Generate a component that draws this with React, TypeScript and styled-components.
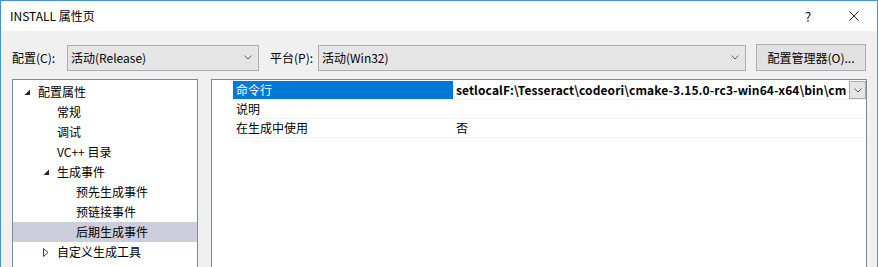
import React from "react";
import styled, { createGlobalStyle } from "styled-components";

const Global = createGlobalStyle`
  html, body { margin: 0; padding: 0; background: #f0f0f0; }
  body { font-family: "Noto Sans CJK SC", "Noto Sans", sans-serif; font-size: 12px; color: #000; }
  #root { width: 878px; height: 267px; overflow: hidden; }
  * { box-sizing: border-box; }
`;

const Window = styled.div`
  width: 878px;
  height: 267px;
  border: 1px solid #3e95d9;
  border-bottom: none;
  background: #f0f0f0;
  display: flex;
  flex-direction: column;
  overflow: hidden;
`;

const TitleBar = styled.div`
  height: 30px;
  flex: none;
  background: #fff;
  display: flex;
  align-items: center;
  padding-left: 9px;
`;

const Title = styled.div`
  flex: 1;
  font-size: 12px;
  line-height: 16px;
`;

const TitleButton = styled.div<{ $w: number }>`
  width: ${(p) => p.$w}px;
  height: 30px;
  display: flex;
  align-items: center;
  justify-content: center;
  font-size: 13px;
  color: #111;
`;

const Body = styled.div`
  flex: 1;
  display: flex;
  flex-direction: column;
  padding: 13px 11px 0 11px;
`;

const ConfigRow = styled.div`
  display: flex;
  align-items: center;
  height: 27px;
`;

const Label = styled.div<{ $w: number; $ml?: number }>`
  width: ${(p) => p.$w}px;
  margin-left: ${(p) => p.$ml ?? 0}px;
  flex: none;
  line-height: 16px;
`;

const Combo = styled.div<{ $w: number }>`
  width: ${(p) => p.$w}px;
  height: 26px;
  flex: none;
  background: #e5e5e5;
  border: 1px solid #acacac;
  display: flex;
  align-items: center;
  padding: 0 6px 0 3px;
`;

const ComboText = styled.div`
  flex: 1;
  line-height: 16px;
`;

const Button = styled.div`
  margin-left: 10px;
  width: 110px;
  height: 27px;
  flex: none;
  background: #e1e1e1;
  border: 1px solid #adadad;
  display: flex;
  align-items: center;
  justify-content: center;
  line-height: 16px;
`;

const Panels = styled.div`
  display: flex;
  margin-top: 8px;
  flex: 1;
  gap: 13px;
`;

const TreePanel = styled.div`
  width: 186px;
  flex: none;
  height: 200px;
  background: #fff;
  border: 1px solid #828790;
  padding-top: 2px;
`;

const TreeRow = styled.div<{ $level: number; $selected?: boolean }>`
  height: 20px;
  display: flex;
  align-items: center;
  padding-left: ${(p) => 8 + p.$level * 19}px;
  background: ${(p) => (p.$selected ? "#cccedb" : "transparent")};
  line-height: 16px;
`;

const Arrow = styled.div`
  width: 17px;
  height: 20px;
  flex: none;
  display: flex;
  align-items: center;
  justify-content: flex-start;
  padding-left: 3px;
`;

const GridPanel = styled.div`
  width: 656px;
  flex: none;
  height: 200px;
  background: #fff;
  border: 1px solid #828790;
  padding: 1px 0 0 21px;
`;

const GridRow = styled.div`
  height: 19px;
  display: flex;
  border-bottom: 1px solid #f0f0f0;
`;

const NameCell = styled.div<{ $selected?: boolean }>`
  width: 220px;
  flex: none;
  padding-left: 3px;
  display: flex;
  align-items: center;
  background: ${(p) => (p.$selected ? "#0078d7" : "transparent")};
  color: ${(p) => (p.$selected ? "#fff" : "#000")};
  line-height: 16px;
`;

const ValueCell = styled.div<{ $bold?: boolean }>`
  flex: 1;
  min-width: 0;
  display: flex;
  align-items: center;
  padding-left: 3px;
  font-weight: ${(p) => (p.$bold ? 700 : 400)};
  line-height: 16px;
  white-space: nowrap;
  overflow: hidden;
`;

const ValueText = styled.div`
  flex: 1;
  min-width: 0;
  overflow: hidden;
  letter-spacing: 0.1px;
`;

const DropButton = styled.div`
  width: 17px;
  height: 18px;
  flex: none;
  background: #e5e5e5;
  border: 1px solid #acacac;
  display: flex;
  align-items: center;
  justify-content: center;
`;

const Chevron = () => (
  <svg width="8" height="5" viewBox="0 0 8 5">
    <path d="M0.5 0.5 L4 4 L7.5 0.5" fill="none" stroke="#5a5a5a" strokeWidth="1" />
  </svg>
);

const Expanded = () => (
  <svg width="7" height="7" viewBox="0 0 7 7">
    <path d="M6 0.5 L6 6 L0.5 6 Z" fill="#262626" />
  </svg>
);

const Collapsed = () => (
  <svg width="6" height="9" viewBox="0 0 6 9">
    <path d="M0.5 0.5 L5 4.5 L0.5 8.5 Z" fill="none" stroke="#444" strokeWidth="1" />
  </svg>
);

const Close = () => (
  <svg width="10" height="10" viewBox="0 0 10 10">
    <path d="M0.5 0.5 L9.5 9.5 M9.5 0.5 L0.5 9.5" stroke="#222" strokeWidth="1" />
  </svg>
);

type TreeItem = { label: string; level: number; arrow?: "open" | "closed"; selected?: boolean };

const treeItems: TreeItem[] = [
  { label: "配置属性", level: 0, arrow: "open" },
  { label: "常规", level: 1 },
  { label: "调试", level: 1 },
  { label: "VC++ 目录", level: 1 },
  { label: "生成事件", level: 1, arrow: "open" },
  { label: "预先生成事件", level: 2 },
  { label: "预链接事件", level: 2 },
  { label: "后期生成事件", level: 2, selected: true },
  { label: "自定义生成工具", level: 1, arrow: "closed" },
];

export default function App() {
  return (
    <>
      <Global />
      <Window>
        <TitleBar>
          <Title>INSTALL 属性页</Title>
          <TitleButton $w={46}>?</TitleButton>
          <TitleButton $w={46}>
            <Close />
          </TitleButton>
        </TitleBar>
        <Body>
          <ConfigRow>
            <Label $w={55}>配置(C):</Label>
            <Combo $w={192}>
              <ComboText>活动(Release)</ComboText>
              <Chevron />
            </Combo>
            <Label $w={48} $ml={11}>平台(P):</Label>
            <Combo $w={428}>
              <ComboText>活动(Win32)</ComboText>
              <Chevron />
            </Combo>
            <Button>配置管理器(O)...</Button>
          </ConfigRow>
          <Panels>
            <TreePanel>
              {treeItems.map((t) => (
                <TreeRow key={t.label} $level={t.level} $selected={t.selected}>
                  <Arrow>{t.arrow === "open" ? <Expanded /> : t.arrow === "closed" ? <Collapsed /> : null}</Arrow>
                  {t.label}
                </TreeRow>
              ))}
            </TreePanel>
            <GridPanel>
              <GridRow>
                <NameCell $selected>命令行</NameCell>
                <ValueCell $bold>
                  <ValueText>setlocalF:\Tesseract\codeori\cmake-3.15.0-rc3-win64-x64\bin\cm</ValueText>
                  <DropButton>
                    <Chevron />
                  </DropButton>
                </ValueCell>
              </GridRow>
              <GridRow>
                <NameCell>说明</NameCell>
                <ValueCell />
              </GridRow>
              <GridRow>
                <NameCell>在生成中使用</NameCell>
                <ValueCell>否</ValueCell>
              </GridRow>
            </GridPanel>
          </Panels>
        </Body>
      </Window>
    </>
  );
}
